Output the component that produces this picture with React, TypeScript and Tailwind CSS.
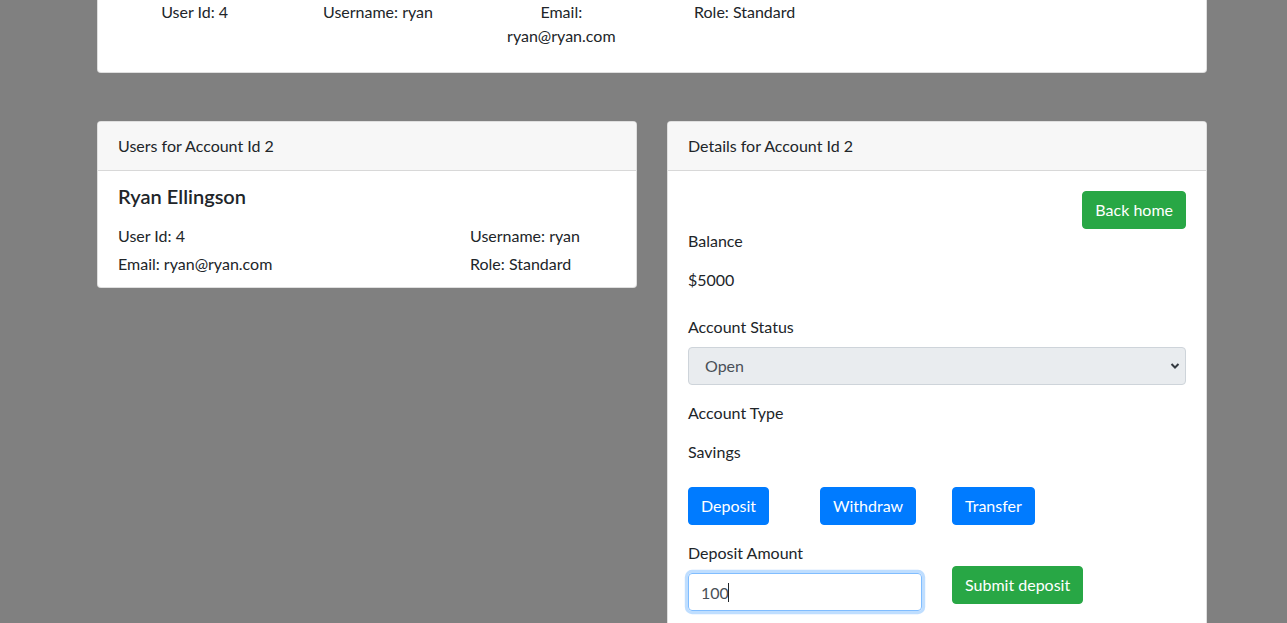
import React from "react";

const font = { fontFamily: "Lato, 'Liberation Sans', sans-serif" };

function CardHeader({ title }: { title: string }) {
  return (
    <div className="px-5 py-3 leading-6 bg-[#f7f7f7] border-b border-black/[0.125] rounded-t-[3px]">
      {title}
    </div>
  );
}

function BlueButton({ label }: { label: string }) {
  return (
    <button className="px-3 py-1.5 leading-6 rounded bg-[#007bff] text-white border border-[#007bff]">
      {label}
    </button>
  );
}

function GreenButton({ label }: { label: string }) {
  return (
    <button className="px-3 py-1.5 leading-6 rounded bg-[#28a745] text-white border border-[#28a745]">
      {label}
    </button>
  );
}

export default function App() {
  return (
    <div className="min-h-screen bg-[#808080] text-[#212529] text-base leading-6 pb-10" style={font}>
      <div className="w-[1110px] ml-[97px]">
        {/* top card, scrolled partly out of view */}
        <div className="bg-white border-x border-b border-black/[0.125] rounded-b px-5 pb-[24px]">
          <div className="flex -mx-[15px]">
            <div className="w-[183.33px] px-[15px] text-center">User Id: 4</div>
            <div className="w-[183.33px] px-[15px] text-center">Username: ryan</div>
            <div className="w-[183.33px] px-[15px] text-center">Email: ryan@ryan.com</div>
            <div className="w-[183.33px] px-[15px] text-center">Role: Standard</div>
          </div>
        </div>

        <div className="grid grid-cols-2 gap-[30px] mt-[48px] items-start">
          {/* users card */}
          <div className="bg-white border border-black/[0.125] rounded">
            <CardHeader title="Users for Account Id 2" />
            <div className="px-5 pt-[13px] pb-[11px]">
              <h5 className="text-[20px] leading-6 font-semibold">Ryan Ellingson</h5>
              <div className="mt-4 space-y-1">
                <div className="flex">
                  <div className="w-[352px]">User Id: 4</div>
                  <div>Username: ryan</div>
                </div>
                <div className="flex">
                  <div className="w-[352px]">Email: ryan@ryan.com</div>
                  <div>Role: Standard</div>
                </div>
              </div>
            </div>
          </div>

          {/* details card */}
          <div className="bg-white border border-black/[0.125] rounded">
            <CardHeader title="Details for Account Id 2" />
            <div className="px-5 pt-5 pb-5">
              <div className="flex justify-end">
                <GreenButton label="Back home" />
              </div>
              <div>Balance</div>
              <div className="mt-[15px]">$5000</div>

              <div className="mt-[23px]">Account Status</div>
              <div className="relative mt-2">
                <select
                  disabled
                  className="w-full h-[38px] appearance-none rounded border border-[#ced4da] bg-[#e9ecef] pl-4 pr-8 text-[#495057] leading-6"
                >
                  <option>Open</option>
                </select>
                <svg
                  className="absolute right-[6px] top-[15px] pointer-events-none"
                  width="10"
                  height="8"
                  viewBox="0 0 10 8"
                >
                  <polyline points="1.5,2 5,5.5 8.5,2" fill="none" stroke="#343a40" strokeWidth="2" />
                </svg>
              </div>

              <div className="mt-4">Account Type</div>
              <div className="mt-[15px]">Savings</div>

              <div className="flex mt-[23px]">
                <div className="w-[132px]">
                  <BlueButton label="Deposit" />
                </div>
                <div className="w-[132px]">
                  <BlueButton label="Withdraw" />
                </div>
                <div className="w-[132px]">
                  <BlueButton label="Transfer" />
                </div>
              </div>

              <div className="flex mt-4">
                <div className="w-[264px]">
                  <label className="block">Deposit Amount</label>
                  <div className="relative mt-2 w-[234px]">
                    <input
                      defaultValue="100"
                      className="w-full h-[38px] px-3 rounded border border-[#80bdff] text-[#495057] outline-none shadow-[0_0_0_3.2px_rgba(0,123,255,0.25)]"
                    />
                    {/* text caret */}
                    <span className="absolute left-[40px] top-[10px] w-px h-[19px] bg-[#212529] pointer-events-none" />
                  </div>
                </div>
                <div className="mt-[25px]">
                  <GreenButton label="Submit deposit" />
                </div>
              </div>

              <div className="h-24" />
            </div>
          </div>
        </div>
      </div>
    </div>
  );
}
